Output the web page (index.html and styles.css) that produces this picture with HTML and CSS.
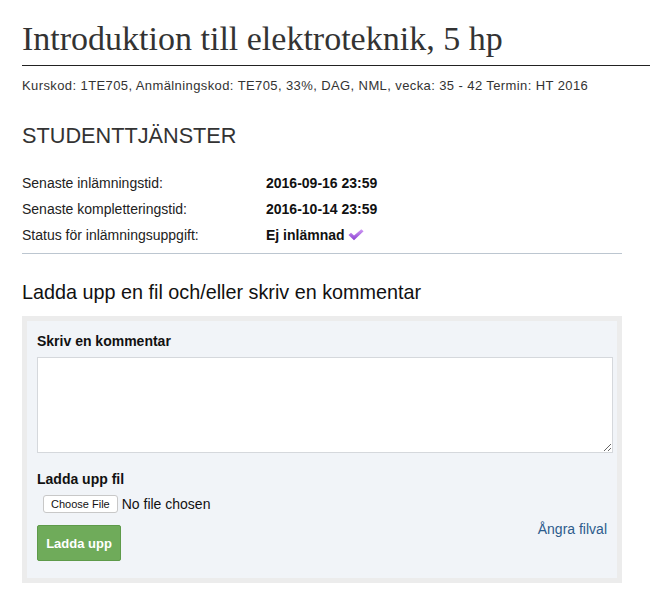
FILE: index.html
```html
<!DOCTYPE html>
<html lang="sv">
<head>
<meta charset="utf-8">
<title>Introduktion till elektroteknik</title>
<link rel="stylesheet" href="styles.css">
</head>
<body>
<div class="page">
  <h1 class="course-title">Introduktion till elektroteknik, 5 hp</h1>
  <hr class="title-rule">
  <p class="course-info">Kurskod: 1TE705, Anmälningskod: TE705, 33%, DAG, NML, vecka: 35 - 42 Termin: HT 2016</p>

  <h2 class="section-title">STUDENTTJÄNSTER</h2>
  <div class="info-table">
    <div class="info-row"><span class="info-label">Senaste inlämningstid:</span><span class="info-value">2016-09-16 23:59</span></div>
    <div class="info-row"><span class="info-label">Senaste kompletteringstid:</span><span class="info-value">2016-10-14 23:59</span></div>
    <div class="info-row"><span class="info-label">Status för inlämningsuppgift:</span><span class="info-value">Ej inlämnad <svg class="check" width="16" height="12" viewBox="0 0 16 12"><defs><linearGradient id="g" x1="0" y1="0" x2="0" y2="1"><stop offset="0" stop-color="#d09af5"/><stop offset="1" stop-color="#8a3fd0"/></linearGradient></defs><path d="M0.5 6 L3 3.8 L6 6.6 L13.3 0.3 L15.6 2.2 L6 11.2 Z" fill="url(#g)"/></svg></span></div>
  </div>
  <hr class="section-rule">

  <h3 class="upload-title">Ladda upp en fil och/eller skriv en kommentar</h3>
  <div class="upload-panel">
    <label class="field-label" for="comment">Skriv en kommentar</label>
    <textarea id="comment" class="comment-box"></textarea>
    <label class="field-label file-label">Ladda upp fil</label>
    <div class="file-row"><span class="file-btn">Choose File</span><span class="file-status">No file chosen</span></div>
    <div class="action-row">
      <button class="submit-btn" type="button">Ladda upp</button>
      <a class="undo-link" href="#">Ångra filval</a>
    </div>
  </div>
</div>
</body>
</html>
```

FILE: styles.css
```css
html, body {
  margin: 0;
  padding: 0;
  background: #fff;
}
body {
  font-family: "Liberation Sans", Arial, sans-serif;
  color: #333;
}
.page {
  padding: 0 0 0 22px;
}
.course-title {
  font-family: "Liberation Serif", "Times New Roman", serif;
  font-weight: normal;
  font-size: 34px;
  line-height: 40px;
  margin: 0;
  padding-top: 19px;
  color: #333;
}
.title-rule {
  border: 0;
  border-top: 1px solid #222;
  margin: 6px 0 0 0;
  height: 0;
}
.course-info {
  font-size: 13px;
  line-height: 18px;
  margin: 11px 0 0 0;
  color: #333;
  letter-spacing: 0.4px;
}
.section-title {
  font-size: 21.7px;
  font-weight: normal;
  line-height: 26px;
  margin: 28px 0 0 0;
  color: #333;
}
.info-table {
  margin-top: 21px;
  width: 600px;
}
.info-row {
  display: grid;
  grid-template-columns: 244px 1fr;
  font-size: 14px;
  line-height: 26px;
  color: #222;
}
.info-value {
  font-weight: bold;
  color: #111;
}
.check {
  vertical-align: -1px;
}
.section-rule {
  border: 0;
  border-top: 1px solid #bcc6d0;
  width: 600px;
  margin: 5px 0 0 0;
  height: 0;
}
.upload-title {
  font-size: 19.8px;
  font-weight: normal;
  line-height: 24px;
  margin: 26px 0 0 0;
  color: #111;
}
.upload-panel {
  box-sizing: border-box;
  width: 600px;
  margin-top: 12px;
  border: 5px solid #ececec;
  background: #f1f4f8;
  padding: 11px 5px 17px 10px;
  display: flex;
  flex-direction: column;
}
.field-label {
  font-size: 14px;
  font-weight: bold;
  line-height: 18px;
  color: #111;
}
.comment-box {
  box-sizing: border-box;
  margin: 7px 0 0 0;
  width: 576px;
  height: 96px;
  border: 1px solid #d5d8dc;
  background: #fff;
  resize: vertical;
}
.file-label {
  margin-top: 17px;
}
.file-row {
  display: flex;
  align-items: center;
  margin-top: 7px;
  margin-left: 6px;
  gap: 4px;
}
.file-btn {
  font-family: "Liberation Sans", Arial, sans-serif;
  font-size: 11px;
  line-height: 16px;
  padding: 0 7px;
  border: 1px solid #c8c8c8;
  border-radius: 3px;
  background: #fff;
  color: #111;
}
.file-status {
  font-size: 14px;
  color: #111;
}
.action-row {
  display: flex;
  justify-content: space-between;
  align-items: flex-start;
  margin-top: 12px;
  width: 570px;
}
.submit-btn {
  font-family: "Liberation Sans", Arial, sans-serif;
  font-size: 13px;
  font-weight: bold;
  color: #fff;
  background: #6fab5a;
  border: 1px solid #5e9a4a;
  border-radius: 2px;
  width: 84px;
  height: 36px;
  padding: 0;
}
.undo-link {
  font-size: 14px;
  color: #2d5b8c;
  text-decoration: none;
  margin-top: -4px;
}
```
